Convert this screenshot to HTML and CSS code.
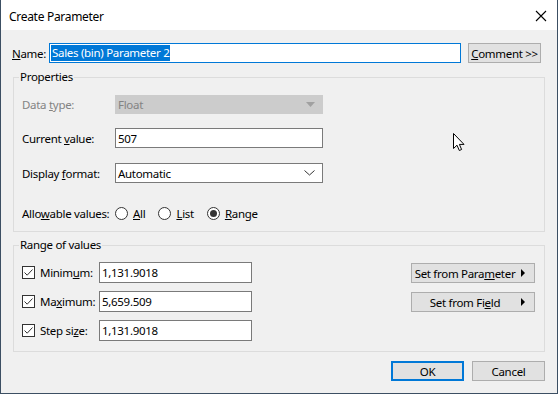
FILE: index.html
```html
<!DOCTYPE html>
<html>
<head>
  <title>Create Parameter</title>
  <meta charset="UTF-8" />
  <meta name="viewport" content="width=device-width, initial-scale=1.0" />
  <link rel="stylesheet" href="styles.css">
</head>
<body>

  <div class="dialog">
    <div class="title-bar">
      <span class="title-text">Create Parameter</span>
      <svg class="close-icon" width="12" height="12" viewBox="0 0 12 12">
        <path d="M1 1 L11 11 M11 1 L1 11" stroke="#000" stroke-width="1.1" fill="none"/>
      </svg>
    </div>

    <div class="content">
      <div class="name-row">
        <label class="name-label"><u>N</u>ame:</label>
        <div class="name-input"><span class="selected-text">Sales (bin) Parameter 2</span></div>
        <button class="win-button comment-button"><u>C</u>omment &gt;&gt;</button>
      </div>

      <div class="group properties-group">
        <span class="group-title">Properties</span>

        <div class="field-row first-row">
          <label class="field-label disabled">Data <u>t</u>ype:</label>
          <div class="select-box disabled-box">
            <span>Float</span>
            <svg width="9" height="5" viewBox="0 0 9 5"><path d="M0 0 H9 L4.5 5 Z" fill="#a0a0a0"/></svg>
          </div>
        </div>

        <div class="field-row">
          <label class="field-label">Current <u>v</u>alue:</label>
          <div class="text-box">507</div>
        </div>

        <div class="field-row third-row">
          <label class="field-label">Display <u>f</u>ormat:</label>
          <div class="select-box">
            <span>Automatic</span>
            <svg width="11" height="6" viewBox="0 0 11 6"><path d="M0.5 0.5 L5.5 5 L10.5 0.5" stroke="#333" stroke-width="1" fill="none"/></svg>
          </div>
        </div>

        <div class="field-row radio-row">
          <label class="allow-label">Allo<u>w</u>able values:</label>
          <span class="radio"></span><span class="radio-text"><u>A</u>ll</span>
          <span class="radio"></span><span class="radio-text"><u>L</u>ist</span>
          <span class="radio checked"></span><span class="radio-text"><u>R</u>ange</span>
        </div>
      </div>

      <div class="group range-group">
        <span class="group-title">Range of values</span>

        <div class="range-body">
          <div class="range-fields">
            <div class="range-row">
              <span class="checkbox"><svg width="11" height="11" viewBox="0 0 11 11"><path d="M1.5 5.5 L4.2 8.2 L9.5 2.5" stroke="#333" stroke-width="1" fill="none"/></svg></span>
              <label class="range-label">Minim<u>u</u>m:</label>
              <div class="text-box range-box">1,131.9018</div>
            </div>
            <div class="range-row">
              <span class="checkbox"><svg width="11" height="11" viewBox="0 0 11 11"><path d="M1.5 5.5 L4.2 8.2 L9.5 2.5" stroke="#333" stroke-width="1" fill="none"/></svg></span>
              <label class="range-label">Ma<u>x</u>imum:</label>
              <div class="text-box range-box">5,659.509</div>
            </div>
            <div class="range-row">
              <span class="checkbox"><svg width="11" height="11" viewBox="0 0 11 11"><path d="M1.5 5.5 L4.2 8.2 L9.5 2.5" stroke="#333" stroke-width="1" fill="none"/></svg></span>
              <label class="range-label">Step si<u>z</u>e:</label>
              <div class="text-box range-box">1,131.9018</div>
            </div>
          </div>

          <div class="range-buttons">
            <button class="win-button set-button"><span class="set-text">Set from Para<u>m</u>eter</span><span class="arrow"></span></button>
            <button class="win-button set-button"><span class="set-text">Set from Fi<u>e</u>ld</span><span class="arrow"></span></button>
          </div>
        </div>
      </div>

      <div class="footer">
        <button class="win-button ok-button">OK</button>
        <button class="win-button">Cancel</button>
      </div>
    </div>

    <svg class="cursor" width="14" height="20" viewBox="0 0 14 20">
      <path d="M0.5 0.5 L0.5 15.5 L4 12.2 L6.3 17.5 L8.6 16.5 L6.4 11.4 L11 11.4 Z" fill="#fff" stroke="#000" stroke-width="1" stroke-linejoin="miter"/>
    </svg>
  </div>

</body>
</html>
```

FILE: styles.css
```css
* {
  box-sizing: border-box;
}

body {
  margin: 0;
  font-family: "Noto Sans", "Open Sans", sans-serif;
  font-size: 11.5px;
  letter-spacing: -0.3px;
  color: #000;
  background-color: #f0f0f0;
  white-space: nowrap;
}

u {
  text-decoration: underline;
  text-underline-offset: 1px;
}

label {
  flex-shrink: 0;
}

.dialog {
  position: relative;
  width: 558px;
  height: 394px;
  border: 1px solid #3c4f63;
  border-top: none;
  background-color: #f0f0f0;
}

.title-bar {
  height: 30px;
  background-color: #fff;
  display: flex;
  align-items: center;
  justify-content: space-between;
  padding: 0 10px 0 8px;
}

.title-text {
  font-size: 12px;
  margin-top: 2px;
}

.close-icon {
  margin-top: 1px;
}

.content {
  padding: 13px 12px 0 12px;
}

/* name row */
.name-row {
  display: flex;
  align-items: center;
  height: 20px;
}

.name-label {
  width: 37px;
  margin-left: -1px;
}

.name-input {
  width: 412px;
  height: 20px;
  border: 1px solid #0078d7;
  background-color: #fff;
  padding: 1px;
  display: flex;
  align-items: center;
  flex-shrink: 0;
}

.selected-text {
  background-color: #0078d7;
  color: #fff;
  line-height: 16px;
  padding: 0 1px;
}

.comment-button {
  width: 78px;
  margin-left: 7px;
  flex-shrink: 0;
}

/* buttons */
.win-button {
  height: 20px;
  border: 1px solid #adadad;
  background-color: #e1e1e1;
  font-family: inherit;
  font-size: 11.5px;
  letter-spacing: -0.3px;
  color: #000;
  padding: 0;
  width: 73px;
  white-space: nowrap;
}

.ok-button {
  border: 2px solid #0078d7;
}

/* group boxes */
.group {
  border: 1px solid #dcdcdc;
  padding: 0 9px 8px 8px;
}

.properties-group {
  margin-top: 14px;
}

.range-group {
  margin-top: 13px;
  padding-bottom: 10px;
}

.group-title {
  display: block;
  width: fit-content;
  margin: -9px 0 0 -3px;
  padding: 0 1px;
  line-height: 16px;
  background-color: #f0f0f0;
}

.field-row {
  display: flex;
  align-items: center;
  height: 20px;
  margin-top: 14px;
}

.first-row {
  margin-top: 9px;
}

.third-row {
  margin-top: 15px;
}

.radio-row {
  margin-top: 20px;
}

.field-label {
  width: 93px;
}

.disabled {
  color: #838383;
}

.text-box,
.select-box {
  width: 208px;
  height: 20px;
  border: 1px solid #7a7a7a;
  background-color: #fff;
  display: flex;
  align-items: center;
  justify-content: space-between;
  padding: 0 7px 0 2px;
  flex-shrink: 0;
}

.disabled-box {
  background-color: #cccccc;
  border-color: #cccccc;
  color: #838383;
  height: 19px;
}

/* radios */
.allow-label {
  width: 93px;
}

.radio {
  width: 13px;
  height: 13px;
  border: 1px solid #333;
  border-radius: 50%;
  background-color: #fff;
  display: flex;
  align-items: center;
  justify-content: center;
  flex-shrink: 0;
}

.radio.checked::after {
  content: "";
  width: 7px;
  height: 7px;
  border-radius: 50%;
  background-color: #333;
}

.radio-text {
  margin: 0 13px 0 5px;
}

/* range of values */
.range-body {
  display: flex;
  justify-content: space-between;
  margin-top: 9px;
}

.range-fields {
  display: flex;
  flex-direction: column;
  gap: 8px;
}

.range-row {
  display: flex;
  align-items: center;
  height: 21px;
}

.checkbox {
  width: 13px;
  height: 13px;
  border: 1px solid #333;
  background-color: #fff;
  display: flex;
  align-items: center;
  justify-content: center;
  flex-shrink: 0;
}

.range-label {
  width: 59px;
  margin-left: 5px;
}

.range-box {
  width: 153px;
  height: 21px;
}

.range-buttons {
  display: flex;
  flex-direction: column;
  gap: 9px;
  padding-top: 1px;
}

.set-button {
  width: 124px;
  display: flex;
  align-items: center;
  padding: 0 9px 0 0;
}

.set-text {
  flex: 1;
  text-align: center;
}

.arrow {
  width: 0;
  height: 0;
  margin-left: 3px;
  border-top: 4px solid transparent;
  border-bottom: 4px solid transparent;
  border-left: 4px solid #000;
}

/* footer */
.footer {
  display: flex;
  justify-content: flex-end;
  gap: 8px;
  margin-top: 9px;
}

/* mouse pointer resting over the dialog */
.cursor {
  position: absolute;
  left: 452px;
  top: 133px;
}
```
